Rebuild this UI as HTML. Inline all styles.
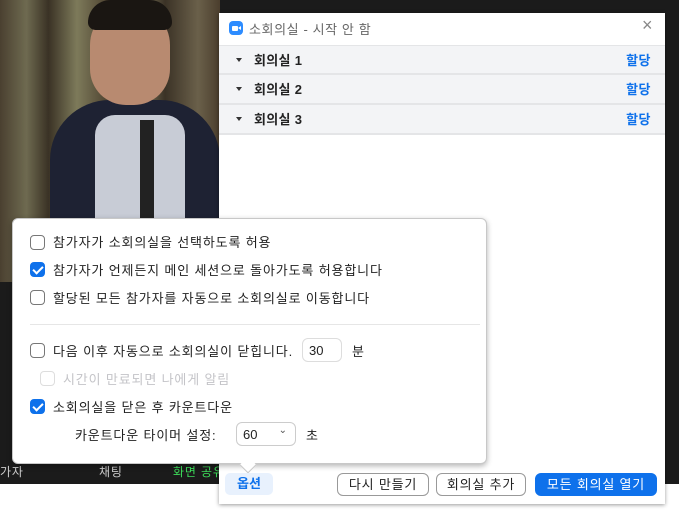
<!DOCTYPE html>
<html><head><meta charset="utf-8"><style>
*{box-sizing:border-box;margin:0;padding:0}
body{width:679px;height:516px;position:relative;overflow:hidden;background:#fff;font-family:"Liberation Sans","Noto Sans CJK KR",sans-serif;font-size:13px;color:#222}
.dark{position:absolute;left:0;top:0;width:679px;height:484px;background:#1b1b1b}
.photo{position:absolute;left:0;top:0;width:220px;height:282px;overflow:hidden;
background:linear-gradient(90deg,#4a4030 0%,#6e6a50 12%,#3a3225 22%,#7d7a5a 35%,#4b3f2e 50%,#8a8566 62%,#3b3226 75%,#6a604a 90%,#4b3e2d 100%)}
.abs{position:absolute}
.dlg{position:absolute;left:219px;top:13px;width:446px;height:491px;background:#fff;box-shadow:0 1px 4px rgba(0,0,0,.4)}
.row{position:absolute;left:0;width:446px;height:30px;background:#f3f4f6;border-bottom:2px solid #e4e5e7;font-weight:bold;font-size:12px}
.row span{position:absolute;left:35px;top:4px;font-size:13px;letter-spacing:.3px}
.row i{position:absolute;left:17px;top:12px;border-left:3px solid transparent;border-right:3px solid transparent;border-top:4px solid #333}
.row b{position:absolute;right:14px;top:4px;color:#0e71eb;font-weight:bold;font-size:13px;letter-spacing:.5px}
.pop{position:absolute;left:12px;top:218px;width:475px;height:246px;background:#fff;border:1px solid #c8c8c8;border-radius:6px;box-shadow:0 2px 6px rgba(0,0,0,.3)}
.cb{position:absolute;width:15px;height:15px;border:1.5px solid #777;border-radius:4px;background:#fff}
.cb.on{background:#0e71eb;border-color:#0e71eb}
.cb.on:after{content:"";position:absolute;left:4px;top:1px;width:4px;height:8px;border:solid #fff;border-width:0 2px 2px 0;transform:rotate(45deg)}
.t{position:absolute;font-size:13px;white-space:nowrap;letter-spacing:.85px}
.btn{position:absolute;top:473px;height:23px;border:1px solid #999;border-radius:6px;font-size:13px;text-align:center;line-height:21px;background:#fff;letter-spacing:.8px}
</style></head><body>
<div class="dark"></div>
<div class="photo">
 <div class="abs" style="left:50px;top:100px;width:170px;height:200px;background:#1e2233;border-radius:60px 60px 0 0"></div>
 <div class="abs" style="left:95px;top:115px;width:90px;height:180px;background:#c8ccd6;border-radius:20px 20px 0 0"></div>
 <div class="abs" style="left:140px;top:120px;width:14px;height:170px;background:#222"></div>
 <div class="abs" style="left:90px;top:5px;width:80px;height:100px;background:#b88a70;border-radius:40px 40px 36px 36px"></div>
 <div class="abs" style="left:88px;top:0px;width:84px;height:30px;background:#1a1612;border-radius:30px 30px 10px 10px"></div>
</div>
<div class="t" style="left:0;top:463px;color:#ccc;font-size:12px">가자</div>
<div class="t" style="left:99px;top:463px;color:#ccc;font-size:12px">채팅</div>
<div class="t" style="left:173px;top:463px;color:#3ddc5a;font-size:12px">화면 공유</div>
<div class="dlg">
 <div class="abs" style="left:10px;top:8px;width:14px;height:14px;background:#2d8cff;border-radius:4px"><div class="abs" style="left:3px;top:5px;width:6px;height:5px;background:#fff;border-radius:1px"></div><div class="abs" style="left:9px;top:5px;border-top:2.5px solid transparent;border-bottom:2.5px solid transparent;border-right:3px solid #fff"></div></div>
 <div class="t" style="left:30px;top:6px;color:#666;font-size:13px;letter-spacing:.6px">소회의실 - 시작 안 함</div>
 <div class="t" style="left:423px;top:2px;color:#888;font-size:18px;font-weight:300">×</div>
 <div class="row" style="top:32px;border-top:1px solid #e4e5e7"><i></i><span>회의실 1</span><b>할당</b></div>
 <div class="row" style="top:62px"><i></i><span>회의실 2</span><b>할당</b></div>
 <div class="row" style="top:92px"><i></i><span>회의실 3</span><b>할당</b></div>
</div>
<div class="pop">
 <div class="cb" style="left:17px;top:16px"></div><div class="t" style="left:40px;top:13px">참가자가 소회의실을 선택하도록 허용</div>
 <div class="cb on" style="left:17px;top:43px"></div><div class="t" style="left:40px;top:41px">참가자가 언제든지 메인 세션으로 돌아가도록 허용합니다</div>
 <div class="cb" style="left:17px;top:71px"></div><div class="t" style="left:40px;top:69px">할당된 모든 참가자를 자동으로 소회의실로 이동합니다</div>
 <div class="abs" style="left:17px;top:105px;width:450px;height:1px;background:#e6e6e6"></div>
 <div class="cb" style="left:17px;top:124px"></div><div class="t" style="left:40px;top:122px">다음 이후 자동으로 소회의실이 닫힙니다.</div>
 <div class="abs" style="left:289px;top:119px;width:40px;height:24px;border:1px solid #ddd;border-radius:6px;padding:4px 0 0 6px">30</div>
 <div class="t" style="left:339px;top:122px">분</div>
 <div class="cb" style="left:27px;top:152px;border-color:#ddd"></div><div class="t" style="left:50px;top:150px;color:#c4c4c8">시간이 만료되면 나에게 알림</div>
 <div class="cb on" style="left:17px;top:180px"></div><div class="t" style="left:40px;top:178px">소회의실을 닫은 후 카운트다운</div>
 <div class="t" style="left:62px;top:206px">카운트다운 타이머 설정:</div>
 <div class="abs" style="left:223px;top:203px;width:60px;height:24px;border:1px solid #ccc;border-radius:6px;padding:4px 0 0 6px">60<span style="position:absolute;right:8px;top:2px;font-size:10px;color:#555">⌄</span></div>
 <div class="t" style="left:293px;top:206px">초</div>
</div>
<div class="abs" style="left:242px;top:459px;width:12px;height:12px;background:#fff;border-right:1px solid #c8c8c8;border-bottom:1px solid #c8c8c8;transform:rotate(45deg)"></div>
<div class="abs" style="left:225px;top:473px;width:48px;height:22px;background:#e8f1fd;border-radius:5px;color:#0e71eb;text-align:center;line-height:22px;font-weight:bold">옵션</div>
<div class="btn" style="left:337px;width:92px">다시 만들기</div>
<div class="btn" style="left:436px;width:90px">회의실 추가</div>
<div class="btn" style="left:535px;width:122px;background:#0e71eb;border-color:#0e71eb;color:#fff">모든 회의실 열기</div>
</body></html>
